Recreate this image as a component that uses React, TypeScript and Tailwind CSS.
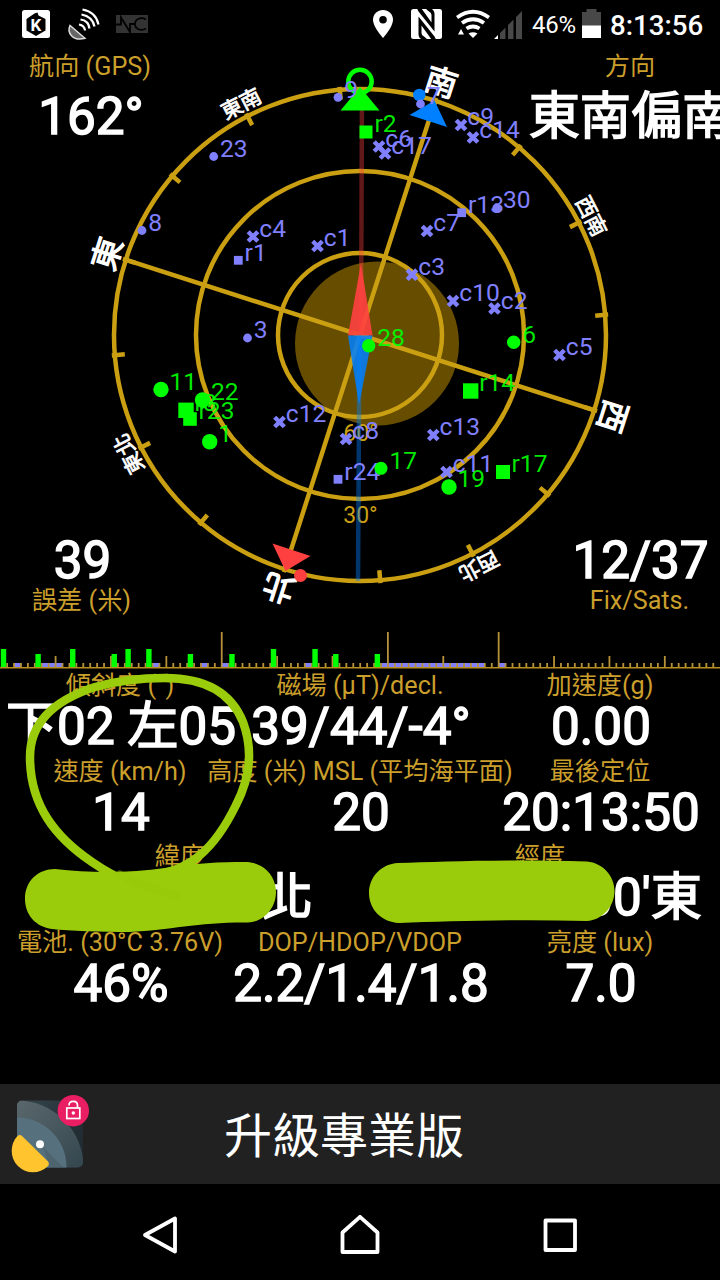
import { Fragment } from 'react'

type Shape = 'dot' | 'square' | 'cross'

interface Satellite {
  id: string
  x: number
  y: number
  shape: Shape
}

const GOLD = '#cb9f12'
const VIOLET = '#8080ff'
const LIME = '#00ff00'
const MARKER = '#9bcc0b'

const CX = 360
const CY = 335
const HEADING = 162.2

// Satellites in view but not used in the fix
const visible: Satellite[] = [
  { id: '9', x: 338, y: 97.3, shape: 'dot' },
  { id: '7', x: 420.5, y: 104, shape: 'dot' },
  { id: '8', x: 142, y: 230.5, shape: 'dot' },
  { id: '23', x: 213.7, y: 156.5, shape: 'dot' },
  { id: '3', x: 247.5, y: 338, shape: 'dot' },
  { id: '30', x: 496.7, y: 208, shape: 'dot' },
  { id: 'r1', x: 238.3, y: 260.3, shape: 'square' },
  { id: 'r13', x: 461.7, y: 212.7, shape: 'square' },
  { id: 'r24', x: 338, y: 479.3, shape: 'square' },
  { id: 'c4', x: 253, y: 236.5, shape: 'cross' },
  { id: 'c1', x: 317.5, y: 246, shape: 'cross' },
  { id: 'c6', x: 379, y: 146.5, shape: 'cross' },
  { id: 'c17', x: 385, y: 153.5, shape: 'cross' },
  { id: 'c9', x: 461, y: 125, shape: 'cross' },
  { id: 'c14', x: 473, y: 137.5, shape: 'cross' },
  { id: 'c7', x: 427, y: 231, shape: 'cross' },
  { id: 'c3', x: 412, y: 274.7, shape: 'cross' },
  { id: 'c10', x: 453, y: 301, shape: 'cross' },
  { id: 'c2', x: 494.5, y: 308.5, shape: 'cross' },
  { id: 'c5', x: 559.5, y: 355, shape: 'cross' },
  { id: 'c12', x: 279.5, y: 422, shape: 'cross' },
  { id: 'c8', x: 346, y: 439, shape: 'cross' },
  { id: 'c13', x: 433.3, y: 435, shape: 'cross' },
  { id: 'c11', x: 446.5, y: 472, shape: 'cross' },
]

const used: Satellite[] = [
  { id: 'r2', x: 366, y: 132, shape: 'square' },
  { id: '28', x: 368.7, y: 345.7, shape: 'dot' },
  { id: '6', x: 513.7, y: 342.3, shape: 'dot' },
  { id: 'r14', x: 470.7, y: 391, shape: 'square' },
  { id: '11', x: 161, y: 389.5, shape: 'dot' },
  { id: '22', x: 202.5, y: 400, shape: 'dot' },
  { id: 'r8', x: 186, y: 410.3, shape: 'square' },
  { id: 'r23', x: 190, y: 419, shape: 'square' },
  { id: '1', x: 209.7, y: 441.7, shape: 'dot' },
  { id: '17', x: 381, y: 468.3, shape: 'dot' },
  { id: '19', x: 449, y: 487, shape: 'dot' },
  { id: 'r17', x: 503, y: 472, shape: 'square' },
]

const sizes: Record<string, number> = { r2: 6.5, '28': 6.7, '6': 6.7, '17': 6.5, r23: 6.8, r17: 7 }

const mainPoints = [
  { name: '北', bearing: 0 },
  { name: '東', bearing: 90 },
  { name: '南', bearing: 180 },
  { name: '西', bearing: 270 },
]

const subPoints = [
  { name: '東北', bearing: 45 },
  { name: '東南', bearing: 135 },
  { name: '西南', bearing: 225 },
  { name: '西北', bearing: 315 },
]

function Marker({ sat, r }: { sat: Satellite; r: number }) {
  const { x, y } = sat
  if (sat.shape === 'dot') return <circle cx={x} cy={y} r={r} />
  if (sat.shape === 'square') return <rect x={x - r} y={y - r} width={r * 2} height={r * 2} />
  const d = r - 0.7
  return (
    <path
      d={`M${x - d} ${y - d}L${x + d} ${y + d}M${x - d} ${y + d}L${x + d} ${y - d}`}
      stroke={VIOLET}
      strokeWidth="4.4"
    />
  )
}

function SkyView() {
  return (
    <svg viewBox="0 50 720 580" className="absolute inset-0 h-[580px] w-[720px] font-['Roboto','Noto_Sans_CJK_TC',sans-serif]">
      <circle cx="377" cy="343.5" r="82" fill="#664d00" />
      <g fill="none" stroke={GOLD} strokeWidth="4.5">
        <circle cx={CX} cy={CY} r="82" />
        <circle cx={CX} cy={CY} r="164" />
        <circle cx={CX} cy={CY} r="246" />
        <g transform={`rotate(${-HEADING} ${CX} ${CY})`}>
          <path d={`M${CX} ${CY - 248}V${CY + 248}M${CX - 248} ${CY}H${CX + 248}`} />
          {Array.from({ length: 16 }, (_, i) => (
            <path key={i} d={`M${CX} ${CY - 249}v13`} transform={`rotate(${i * 22.5} ${CX} ${CY})`} />
          ))}
        </g>
      </g>

      <g fill={GOLD} fontSize="23" textAnchor="middle">
        <text x="360.5" y="441">60°</text>
        <text x="360.5" y="523">30°</text>
      </g>

      <g fill="#fff" stroke="#fff" textAnchor="middle">
        {mainPoints.map(p => (
          <text key={p.name} x={CX} y={CY - 254} fontSize="32" strokeWidth="1.2" transform={`rotate(${p.bearing - HEADING} ${CX} ${CY})`}>
            {p.name}
          </text>
        ))}
        {subPoints.map(p => (
          <text key={p.name} x={CX} y={CY - 252.5} fontSize="21" strokeWidth="0.8" transform={`rotate(${p.bearing - HEADING} ${CX} ${CY})`}>
            {p.name}
          </text>
        ))}
      </g>

      {/* north / south ends of the rose */}
      <path d="M434.5 100.5L409.5 115L447 127Z" fill="#0080ff" />
      <circle cx="419.3" cy="95" r="6.2" fill="#0080ff" />
      <path d="M285.5 571L272.5 543.5L310.5 556Z" fill="#ff4040" />
      <circle cx="300.5" cy="575.5" r="6.5" fill="#ff4040" />

      {/* magnetic needle */}
      <path d="M362 90L361 335" stroke="#ff4040" strokeOpacity="0.38" strokeWidth="4.5" />
      <path d="M359.5 335L358 581" stroke="#0080ff" strokeOpacity="0.42" strokeWidth="4.5" />
      <path d="M361 263L348 335.5H372.5Z" fill="#ff4040" fillOpacity="0.9" />
      <path d="M348 335.5H372.5L359 405Z" fill="#0080ff" fillOpacity="0.86" />

      {/* travel direction */}
      <circle cx="360" cy="81.5" r="11.7" fill="none" stroke={LIME} strokeWidth="4.5" />
      <path d="M360 87L379.5 110.5H340.5Z" fill={LIME} />

      <g fill={VIOLET} fontSize="24.6">
        {visible.map(s => (
          <Fragment key={s.id}>
            <Marker sat={s} r={s.shape === 'cross' ? 5.5 : 4.4} />
            <text x={s.x + 6.3} y={s.y + 0.3}>{s.id}</text>
          </Fragment>
        ))}
      </g>
      <g fill={LIME} fontSize="24.6">
        {used.map(s => (
          <Fragment key={s.id}>
            <Marker sat={s} r={sizes[s.id] ?? 7.7} />
            <text x={s.x + 8.5} y={s.y + 0.3} fillOpacity="0.92">{s.id}</text>
          </Fragment>
        ))}
      </g>
    </svg>
  )
}

const SLOT = 720 / 104
const signalBars = [
  [0, 18], [5, 13], [10, 18], [16, 13], [18, 18], [21, 18],
  [27, 13], [33, 13], [39, 18], [45, 18], [48, 13], [54, 13],
]
// [first slot, slot count]
const weakSlots = [[2, 1], [6, 3], [22, 1], [29, 1], [32, 1], [44, 1], [55, 15], [72, 1]]
const groupEnds = [32, 56, 72]

function SignalStrip() {
  return (
    <svg viewBox="0 630 720 42" className="block h-[42px] w-[720px]">
      {weakSlots.map(([s, n]) => (
        <rect key={s} x={s * SLOT} y="663" width={n * SLOT} height="4" fill={VIOLET} />
      ))}
      {Array.from({ length: 103 }, (_, i) => i + 1).map(i => {
        const h = groupEnds.includes(i) ? 35 : i % 8 === 0 ? 11 : 4
        return <rect key={i} x={i * SLOT - 0.7} y={667 - h} width="1.8" height={h} fill="#b8923a" />
      })}
      {signalBars.map(([s, h]) => (
        <rect key={s} x={s * SLOT + 0.8} y={667 - h} width="5.4" height={h} fill={LIME} />
      ))}
      <rect x="0" y="667" width="720" height="1.5" fill="#b8901f" />
    </svg>
  )
}

function StatusBar() {
  return (
    <header className="flex h-[50px] w-full shrink-0 items-start pl-[22px] text-white">
      <svg viewBox="22 0 28 50" className="h-[50px] w-[28px]">
        <rect x="22" y="10" width="28" height="28" rx="2.5" fill="#fff" />
        <path d="M34.5 13.5L37.5 12.5L38.5 15.5L45.5 19V30.5L36 36L26.5 30.5V19Z" fill="#000" />
        <text x="36" y="30.8" fontSize="17" fontWeight="700" textAnchor="middle" fill="#fff" className="font-['Roboto',sans-serif]">K</text>
      </svg>
      <svg viewBox="66 0 36 50" className="ml-4 h-[50px] w-[36px]" fill="none" stroke="#fff">
        <path d="M70 25.5C66.5 33 73 41.5 85 38.3Z" fill="#666" stroke="#ddd" strokeWidth="1.5" />
        <path d="M79 24.5Q84.5 25.5 85 30.5M80.5 19.5Q88.5 20.5 89.5 28.5M81.5 14.5Q92.5 16.5 94.5 26.5M82.5 9.5Q96 12 98.5 24.5" strokeWidth="2.2" />
      </svg>
      <svg viewBox="116 0 32 50" className="ml-[14px] h-[50px] w-[32px]">
        <rect x="116" y="15" width="32" height="18" fill="#333" />
        <path d="M116 24.5H121V17.5L130 32V24H134" fill="none" stroke="#000" strokeWidth="1.8" />
        <path d="M146 19.5C141 16.5 135 19 135 24S141 31.5 146 28.5" fill="none" stroke="#000" strokeWidth="1.8" />
      </svg>

      <svg viewBox="370 0 26 50" className="ml-[222px] h-[50px] w-[26px]">
        <path d="M383 10C377.3 10 373 14.3 373 19.8C373 27 383 38 383 38S393 27 393 19.8C393 14.3 388.7 10 383 10Z" fill="#fff" />
        <circle cx="383" cy="19.8" r="3.8" fill="#000" />
      </svg>
      <svg viewBox="411 0 31 50" className="ml-[15px] h-[50px] w-[31px]">
        <rect x="411" y="9" width="31" height="30" rx="2.5" fill="#fff" />
        {/* two hooked strips with a white fold between them */}
        <path d="M417 8.5H421.5L431.5 22.5V15Q431.5 12.5 429 11.5L426.5 9.5V8.5H431Q434.5 10 434.5 14V31.5L418.5 11.5Z" fill="#000" />
        <path d="M436 39.5H431.5L421.5 25.5V33Q421.5 35.5 424 36.5L426.5 38.5V39.5H422Q418.5 38 418.5 34V16.5L434.5 36.5Z" fill="#000" />
      </svg>
      <svg viewBox="456 0 34 50" className="ml-[14px] h-[50px] w-[34px]" fill="none" stroke="#fff" strokeWidth="3.8">
        <path d="M457 17.5Q473 6 489 17.5M462 23Q473 15.5 484 23M466.5 28.5Q473 24.5 479.5 28.5" />
        <path d="M468.5 33.5Q473 31 477.5 33.5L473 38Z" fill="#fff" stroke="none" />
        <path d="M461 29L464 34.5H458Z" fill="#fff" stroke="none" />
      </svg>
      <svg viewBox="494 0 28 50" className="ml-1 h-[50px] w-[28px]" fill="#484848">
        <path d="M494 39L498 35V39Z" fill="#fff" />
        <path d="M500 39V33L505.5 27.5V39ZM508 39V25L513.5 19.5V39ZM516 39V17L522 11V39Z" />
      </svg>
      <span className="ml-[10px] mt-[10px] w-[50px] text-[24px] leading-[31px] tracking-[-0.3px]">46%</span>
      <svg viewBox="582 0 19 50" className="h-[50px] w-[19px]">
        <path d="M582 12H586.5V9H596.5V12H601V26H582Z" fill="#484848" />
        <rect x="582" y="25.5" width="19" height="12.5" fill="#fff" />
      </svg>
      <span className="ml-[9px] mt-[10px] whitespace-nowrap text-[27.7px] font-medium leading-[31px]">8:13:56</span>
    </header>
  )
}

function Label({ children }: { children: React.ReactNode }) {
  return <div className="text-[25.2px] leading-[28px] text-[#cb9f2c]">{children}</div>
}

function Value({ children }: { children: React.ReactNode }) {
  return <div className="pl-[2px] text-[51.2px] leading-[53px] [-webkit-text-stroke:1.5px_white]">{children}</div>
}

function Readout({ label, value }: { label: string; value: string }) {
  return (
    <div className="flex w-[240px] flex-col items-center whitespace-nowrap pb-[4.5px]">
      <Label>{label}</Label>
      <Value>{value}</Value>
    </div>
  )
}

const readings = [
  [
    { label: '傾斜度 (°)', value: '下02 左05' },
    { label: '磁場 (µT)/decl.', value: '39/44/-4°' },
    { label: '加速度(g)', value: '0.00' },
  ],
  [
    { label: '速度 (km/h)', value: '14' },
    { label: '高度 (米) MSL (平均海平面)', value: '20' },
    { label: '最後定位', value: '20:13:50' },
  ],
]

const lastReadings = [
  { label: '電池. (30°C 3.76V)', value: '46%' },
  { label: 'DOP/HDOP/VDOP', value: '2.2/1.4/1.8' },
  { label: '亮度 (lux)', value: '7.0' },
]

// Pen strokes: circle round the speed, coordinates blotted out
function PenMarks() {
  return (
    <svg viewBox="0 670 720 270" className="absolute left-0 top-[670px] h-[270px] w-[720px]">
      <path
        d="M178 897C140 890 112 876 92 862C55 837 30 805 30 757C30 722 55 700 95 687C120 680 145 678 165 678C205 678 231 692 243 722C254 752 249 780 236 805C215 848 190 872 150 875"
        fill="none"
        stroke={MARKER}
        strokeWidth="8.5"
        strokeLinecap="round"
      />
      <path
        d="M55 869C90 873 130 873 165 868C195 863 220 862 245 862C263 862 276 875 276 892C276 909 263 922 248 922.5C200 922 170 930 130 932C100 932 70 931 52 929C36 927 25 915 25 899C25 881 38 869 55 869Z"
        fill={MARKER}
      />
      <path
        d="M398 863C440 862 500 859 587 861.5C603 863 614.5 876 614.5 891C614.5 907 602 920 587 921C520 919 450 921 399 923C381 922 369 909 369 893C369 877 381 864 398 863Z"
        fill={MARKER}
      />
      <path d="M120 874.5Q145 888 178 896" fill="none" stroke="#97c70a" strokeWidth="8" strokeLinecap="round" strokeOpacity="0.5" />
    </svg>
  )
}

function ProBanner() {
  return (
    <div className="flex h-[100px] w-full items-center bg-[#212121]">
      <svg viewBox="0 1084 100 100" className="h-[100px] w-[100px]">
        <defs>
          <clipPath id="tile">
            <rect x="17" y="1100.5" width="66" height="67" rx="5" />
          </clipPath>
          <linearGradient id="dark" x1="0" y1="0" x2="1" y2="1">
            <stop offset="0" stopColor="#37474f" />
            <stop offset="0.5" stopColor="#263238" />
            <stop offset="1" stopColor="#1d282d" />
          </linearGradient>
          <linearGradient id="mid" gradientUnits="userSpaceOnUse" x1="17" y1="1101" x2="83" y2="1167">
            <stop offset="0" stopColor="#5a686d" />
            <stop offset="1" stopColor="#34464e" />
          </linearGradient>
        </defs>
        <g clipPath="url(#tile)">
          <rect x="17" y="1100" width="66" height="68" fill="url(#dark)" />
          <circle cx="17" cy="1167" r="66.5" fill="url(#mid)" />
          <circle cx="17" cy="1167" r="49.5" fill="#56707d" />
          <path d="M43 1147L64 1168H50Z" fill="#455a64" fillOpacity="0.5" />
        </g>
        <path d="M17.5 1136Q20 1134 22.5 1136.5L48 1161.5Q50 1164 47.5 1166.5A21.3 21.3 0 0 1 33 1172.3A21.3 21.3 0 0 1 11.7 1151Q12 1141.5 17.5 1136Z" fill="#ffc42e" />
        <circle cx="40" cy="1144.3" r="4" fill="#fff" />
        <circle cx="73.3" cy="1110.7" r="15.7" fill="#e91e63" />
        <g fill="none" stroke="#fff" strokeWidth="1.7">
          <rect x="66.8" y="1108" width="13" height="10.5" />
          <path d="M69 1105.5C69 1100 77.5 1100 77.5 1105.5V1108" />
        </g>
        <circle cx="73.3" cy="1113" r="1.7" fill="#fff" />
      </svg>
      <span className="ml-[124px] mt-1.5 whitespace-nowrap text-[48px] leading-[60px]">升級專業版</span>
    </div>
  )
}

function NavBar() {
  return (
    <nav className="flex h-[96px] items-center justify-center gap-[160px] pt-[6px]">
      <svg viewBox="0 0 40 40" className="size-10" fill="none" stroke="#fff" strokeWidth="3.8" strokeLinejoin="round">
        <path d="M35 3.5V36.5L5 20Z" />
      </svg>
      <svg viewBox="0 0 40 40" className="size-10" fill="none" stroke="#fff" strokeWidth="3.8" strokeLinejoin="round">
        <path d="M20 1.8L37.5 17.5V37H2.5V17.5Z" />
      </svg>
      <svg viewBox="0 0 40 40" className="size-10" fill="none" stroke="#fff" strokeWidth="3.8" strokeLinejoin="round">
        <rect x="5.5" y="5.5" width="29.5" height="29.5" />
      </svg>
    </nav>
  )
}

export default function App() {
  return (
    <div className="relative flex h-[1280px] w-[720px] flex-col overflow-hidden bg-black font-['Roboto','Noto_Sans_CJK_TC',sans-serif] text-white">
      <StatusBar />

      <section className="relative flex h-[580px] shrink-0 flex-col justify-between pb-[15px] pt-[3px]">
        <div className="flex justify-between whitespace-nowrap">
          <div className="flex w-[180px] flex-col items-center gap-[9px]">
            <Label>航向 (GPS)</Label>
            <Value>162°</Value>
          </div>
          <div className="flex w-[180px] flex-col items-center gap-[9px]">
            <Label>方向</Label>
            <Value>東南偏南</Value>
          </div>
        </div>
        <div className="flex justify-between whitespace-nowrap">
          <div className="flex w-[163px] flex-col items-center">
            <Value>39</Value>
            <Label>誤差 (米)</Label>
          </div>
          <div className="flex w-[161px] flex-col items-center">
            <Value>12/37</Value>
            <Label>Fix/Sats.</Label>
          </div>
        </div>
        <SkyView />
      </section>

      <SignalStrip />

      <main className="h-[412px] shrink-0">
        {readings.map((row, i) => (
          <div key={i} className="flex">
            {row.map(r => <Readout key={r.label} {...r} />)}
          </div>
        ))}
        <div className="flex pb-[4.5px]">
          <div className="w-[360px]">
            <div className="text-center"><Label>緯度</Label></div>
            <div className="pr-[47px] text-right"><Value>北</Value></div>
          </div>
          <div className="w-[360px]">
            <div className="text-center"><Label>經度</Label></div>
            <div className="pr-[18px] text-right"><Value>00'東</Value></div>
          </div>
        </div>
        <div className="flex">
          {lastReadings.map(r => <Readout key={r.label} {...r} />)}
        </div>
      </main>

      <ProBanner />
      <NavBar />
      <PenMarks />
    </div>
  )
}
